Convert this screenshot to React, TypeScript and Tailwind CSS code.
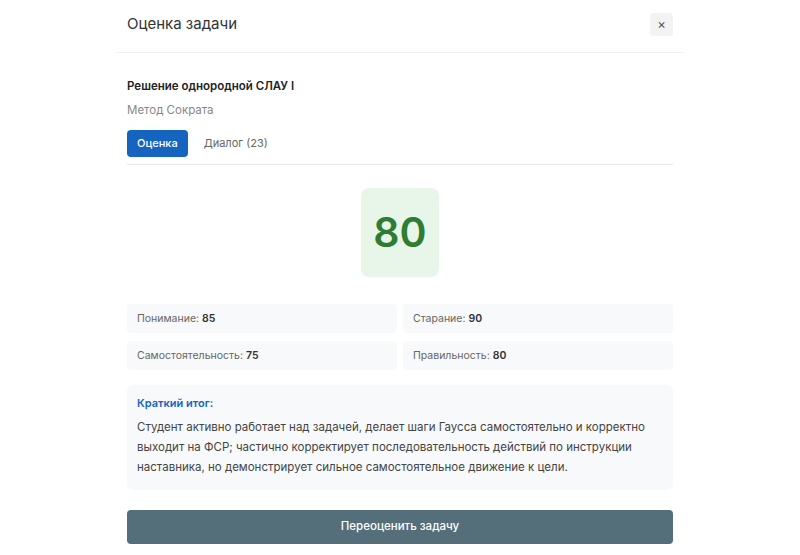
import React from 'react';

const metrics = [
  { label: 'Понимание', value: 85 },
  { label: 'Старание', value: 90 },
  { label: 'Самостоятельность', value: 75 },
  { label: 'Правильность', value: 80 },
];

export default function App() {
  return (
    <div className="min-h-screen bg-white font-['Inter','Noto_Sans',sans-serif] text-[#333]">
      <div className="mx-auto w-[566px]">
        {/* Header */}
        <div className="h-[53px] border-b border-[#f0f0f0] px-[10px] pt-[13px]">
          <div className="flex h-[23px] items-center justify-between">
            <h2 className="text-[15px] font-normal text-[#333]">Оценка задачи</h2>
            <button className="flex h-[23px] w-[23px] items-center justify-center rounded-[4px] bg-[#f3f3f3] text-[13px] leading-none text-[#555]">
              ×
            </button>
          </div>
        </div>

        {/* Body */}
        <div className="px-[10px] pt-[23px]">
          <div className="text-[11.5px] font-semibold leading-[20px] text-[#222]">Решение однородной СЛАУ I</div>
          <div className="mt-[4px] text-[11.5px] leading-[20px] text-[#888]">Метод Сократа</div>

          <div className="mt-[10px] flex items-center gap-[7px] border-b border-[#e8e8e8] pb-[7px]">
            <button className="h-[27px] rounded-[4px] bg-[#1565c0] px-[10px] text-[11px] font-medium text-white">
              Оценка
            </button>
            <button className="h-[27px] px-[9px] text-[11px] text-[#666]">Диалог (23)</button>
          </div>

          <div className="mt-[23px] flex justify-center">
            <div className="flex h-[89px] w-[78px] items-center justify-center rounded-[8px] bg-[#e8f5e9] text-[41px] font-semibold text-[#2e7d32]">
              80
            </div>
          </div>

          <div className="mt-[27px] grid grid-cols-2 gap-x-[6px] gap-y-[8px]">
            {metrics.map((m) => (
              <div
                key={m.label}
                className="flex h-[29px] items-center rounded-[4px] bg-[#f8f9fa] px-[10px] text-[10.5px] text-[#666]"
              >
                {m.label}: <span className="ml-[3px] font-semibold text-[#333]">{m.value}</span>
              </div>
            ))}
          </div>

          <div className="mt-[15px] h-[105px] rounded-[6px] bg-[#f8f9fa] px-[10px] pt-[9px]">
            <div className="text-[11px] font-semibold leading-[18px] text-[#1565c0]">Краткий итог:</div>
            <p className="mt-[5px] text-[11.5px] leading-[20px] text-[#444]">
              Студент активно работает над задачей, делает шаги Гаусса самостоятельно и корректно выходит на ФСР;
              частично корректирует последовательность действий по инструкции наставника, но демонстрирует сильное
              самостоятельное движение к цели.
            </p>
          </div>

          <button className="mt-[20px] h-[34px] w-full rounded-[4px] bg-[#546e7a] text-[11.5px] font-medium text-white">
            Переоценить задачу
          </button>
        </div>
      </div>
    </div>
  );
}
